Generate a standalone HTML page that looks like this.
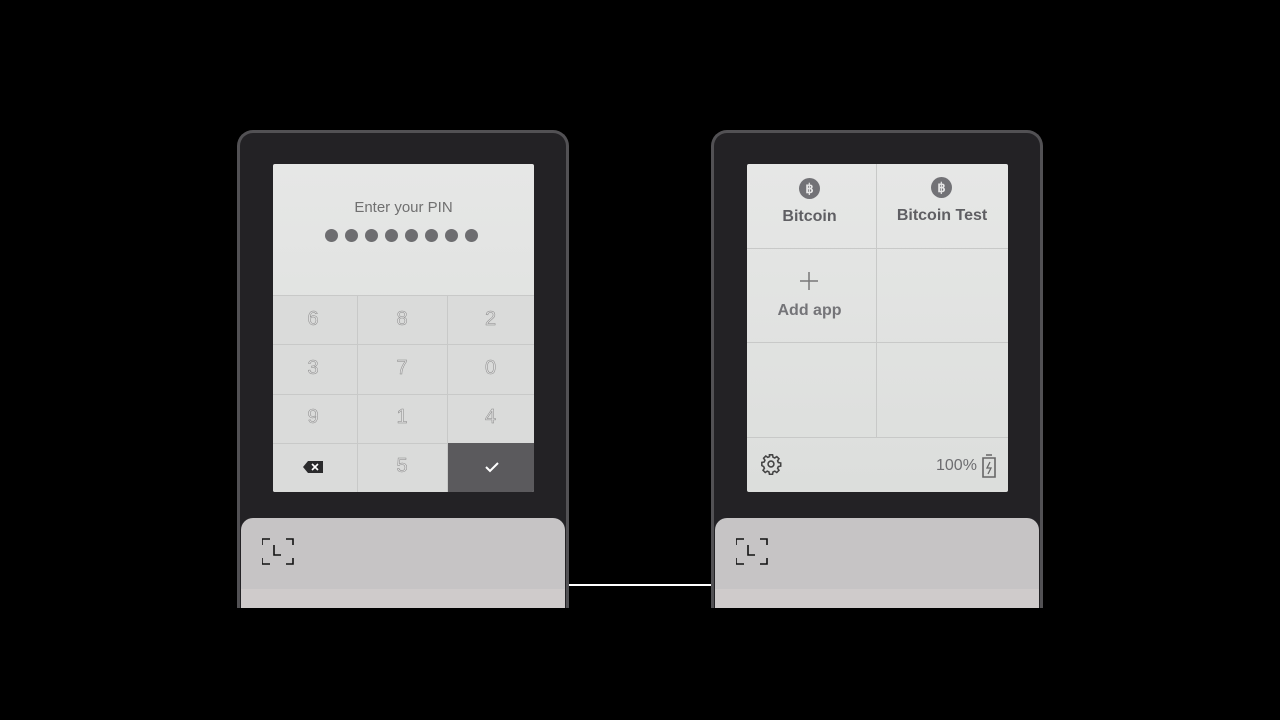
<!DOCTYPE html>
<html><head><style>
*{margin:0;padding:0;box-sizing:border-box}
body{width:1280px;height:720px;background:#000;position:relative;overflow:hidden;font-family:"Liberation Sans",sans-serif}
.dev{position:absolute;top:130px;width:332px;height:478px;background:#232225;border:3px solid #525154;border-bottom:none;border-radius:16px 16px 0 0}
.scr{position:absolute;top:164px;width:261px;height:328px;background:linear-gradient(180deg,#e6e7e6,#dcdedc);border-radius:2px;overflow:hidden}
.pad{position:absolute;top:518px;width:324px;height:90px;background:#c6c4c5;border-radius:12px 12px 0 0}
.pad .low{position:absolute;left:0;right:0;top:71px;bottom:0;background:#cfcbcb}
.abs{position:absolute}
.k{position:absolute;font-size:20px;text-align:center;-webkit-text-stroke:0.5px #8a8a8a;color:#ddd}
.lnh{position:absolute;height:1px;background:#c8c9c8}
.lnv{position:absolute;width:1px;background:#c8c9c8}
</style></head><body>
<div class="abs" style="left:560px;top:584px;width:160px;height:2px;background:#fff"></div>

<div class="dev" style="left:237px"></div>
<div class="scr" style="left:273px">
 <div class="abs" style="left:0;width:261px;top:35px;text-align:center;font-size:15px;color:#707070">Enter your PIN</div>
 <div class="abs" style="left:52px;top:65px;display:flex;gap:7px">
  <i style="width:13px;height:13px;border-radius:50%;background:#6d6d70;display:block"></i><i style="width:13px;height:13px;border-radius:50%;background:#6d6d70;display:block"></i><i style="width:13px;height:13px;border-radius:50%;background:#6d6d70;display:block"></i><i style="width:13px;height:13px;border-radius:50%;background:#6d6d70;display:block"></i><i style="width:13px;height:13px;border-radius:50%;background:#6d6d70;display:block"></i><i style="width:13px;height:13px;border-radius:50%;background:#6d6d70;display:block"></i><i style="width:13px;height:13px;border-radius:50%;background:#6d6d70;display:block"></i><i style="width:13px;height:13px;border-radius:50%;background:#6d6d70;display:block"></i>
 </div>
 <div class="abs" style="left:0;top:131px;width:261px;height:197px;background:#dadbda"></div>
 <div class="lnh" style="left:0;width:261px;top:131px"></div>
 <div class="lnh" style="left:0;width:261px;top:180px"></div>
 <div class="lnh" style="left:0;width:261px;top:230px"></div>
 <div class="lnh" style="left:0;width:261px;top:279px"></div>
 <div class="lnv" style="left:84px;top:131px;height:197px"></div>
 <div class="lnv" style="left:174px;top:131px;height:197px"></div>
 <div class="abs" style="left:175px;top:279px;width:86px;height:49px;background:#5b5a5d"></div>
 <div class="k" style="left:0;width:80px;top:144px">6</div>
 <div class="k" style="left:84px;width:90px;top:144px">8</div>
 <div class="k" style="left:174px;width:87px;top:144px">2</div>
 <div class="k" style="left:0;width:80px;top:193px">3</div>
 <div class="k" style="left:84px;width:90px;top:193px">7</div>
 <div class="k" style="left:174px;width:87px;top:193px">0</div>
 <div class="k" style="left:0;width:80px;top:242px">9</div>
 <div class="k" style="left:84px;width:90px;top:242px">1</div>
 <div class="k" style="left:174px;width:87px;top:242px">4</div>
 <div class="k" style="left:84px;width:90px;top:291px">5</div>
 <svg class="abs" style="left:30px;top:297px" width="20" height="12" viewBox="0 0 20 12"><path d="M5 0H20V12H5L0 6Z" fill="#2a2a2c"/><path d="M9 3L15 9M15 3L9 9" stroke="#fff" stroke-width="1.6"/></svg>
 <svg class="abs" style="left:211px;top:297px" width="16" height="12" viewBox="0 0 16 12"><path d="M2 6L6 10L14 2" stroke="#fff" stroke-width="2" fill="none"/></svg>
</div>
<div class="pad" style="left:241px"><div class="low"></div>
 <svg class="abs" style="left:21px;top:20px" width="32" height="27" viewBox="0 0 32 27" fill="none" stroke="#111" stroke-width="1.6"><path d="M0 7V1H8M24 1H31V7M0 20V26H8M24 26H31V20M12 7V17H19"/></svg>
</div>

<div class="dev" style="left:711px"></div>
<div class="scr" style="left:747px">
 <div class="lnh" style="left:0;width:261px;top:84px"></div>
 <div class="lnh" style="left:0;width:261px;top:178px"></div>
 <div class="lnh" style="left:0;width:261px;top:273px"></div>
 <div class="lnv" style="left:129px;top:0;height:273px"></div>
 <div class="abs" style="left:52px;top:14px;width:21px;height:21px;border-radius:50%;background:#727276;color:#e6e6e6;font-size:13px;font-weight:bold;text-align:center;line-height:21px">฿</div>
 <div class="abs" style="left:184px;top:13px;width:21px;height:21px;border-radius:50%;background:#727276;color:#e6e6e6;font-size:13px;font-weight:bold;text-align:center;line-height:21px">฿</div>
 <div class="abs" style="left:0;width:125px;top:44px;text-align:center;font-size:16px;font-weight:bold;color:#5f5f63">Bitcoin</div>
 <div class="abs" style="left:129px;width:132px;top:43px;text-align:center;font-size:16px;font-weight:bold;color:#5f5f63">Bitcoin Test</div>
 <svg class="abs" style="left:52px;top:107px" width="20" height="20"><path d="M10 1V19M1 10H19" stroke="#777" stroke-width="1.5"/></svg>
 <div class="abs" style="left:0;width:125px;top:138px;text-align:center;font-size:16px;font-weight:bold;color:#747478">Add app</div>
 <svg class="abs" style="left:13px;top:289px" width="22" height="22" viewBox="0 0 24 24" fill="none" stroke="#444" stroke-width="1.7"><circle cx="12" cy="12" r="3.2"/><path d="M10.3 2h3.4l.5 2.6 1.9.8 2.2-1.5 2.4 2.4-1.5 2.2.8 1.9 2.6.5v3.4l-2.6.5-.8 1.9 1.5 2.2-2.4 2.4-2.2-1.5-1.9.8-.5 2.6h-3.4l-.5-2.6-1.9-.8-2.2 1.5-2.4-2.4 1.5-2.2-.8-1.9L2 13.7v-3.4l2.6-.5.8-1.9-1.5-2.2 2.4-2.4 2.2 1.5 1.9-.8z"/></svg>
 <div class="abs" style="left:189px;top:293px;font-size:16px;color:#6d6d70">100%</div>
 <svg class="abs" style="left:234px;top:290px" width="16" height="24" viewBox="0 0 16 24" fill="none" stroke="#666" stroke-width="1.6"><path d="M5 1H11M2 4H14V23H2Z"/><path d="M9 8L6 14H10L7 20" stroke-width="1.3"/></svg>
</div>
<div class="pad" style="left:715px"><div class="low"></div>
 <svg class="abs" style="left:21px;top:20px" width="32" height="27" viewBox="0 0 32 27" fill="none" stroke="#111" stroke-width="1.6"><path d="M0 7V1H8M24 1H31V7M0 20V26H8M24 26H31V20M12 7V17H19"/></svg>
</div>
</body></html>
